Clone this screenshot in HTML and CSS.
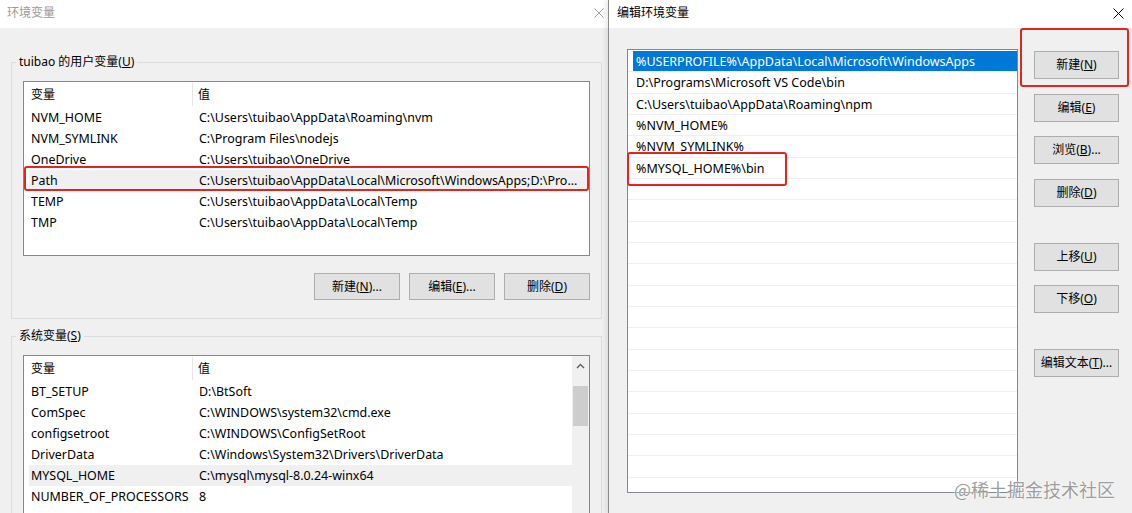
FILE: index.html
```html
<!DOCTYPE html>
<html lang="zh-CN">
<head>
<meta charset="utf-8">
<title>环境变量</title>
<link rel="stylesheet" href="styles.css">
</head>
<body>
<div class="screen">
  <section class="win env">
    <div class="titlebar inactive">
      <span class="title">环境变量</span>
      <svg class="close" width="10" height="10" viewBox="0 0 10 10"><path d="M0.5 0.5L9.5 9.5M9.5 0.5L0.5 9.5" stroke="#a0a0a0" stroke-width="1" fill="none"/></svg>
    </div>
    <div class="env-body">
      <div class="group user-group">
        <div class="group-title">tuibao 的用户变量(<u>U</u>)</div>
        <div class="listview user-list">
          <div class="lv-main">
            <div class="lv-head"><div class="hc c1">变量</div><div class="hc c2">值</div></div>
            <div class="lv-row"><span class="c1">NVM_HOME</span><span class="c2">C:\Users\tuibao\AppData\Roaming\nvm</span></div>
            <div class="lv-row"><span class="c1">NVM_SYMLINK</span><span class="c2">C:\Program Files\nodejs</span></div>
            <div class="lv-row"><span class="c1">OneDrive</span><span class="c2">C:\Users\tuibao\OneDrive</span></div>
            <div class="lv-row hl"><span class="c1">Path</span><span class="c2">C:\Users\tuibao\AppData\Local\Microsoft\WindowsApps;D:\Pro...</span></div>
            <div class="lv-row"><span class="c1">TEMP</span><span class="c2">C:\Users\tuibao\AppData\Local\Temp</span></div>
            <div class="lv-row"><span class="c1">TMP</span><span class="c2">C:\Users\tuibao\AppData\Local\Temp</span></div>
          </div>
          <div class="annot annot-path"></div>
        </div>
        <div class="btn-row">
          <button class="btn">新建(<u>N</u>)...</button>
          <button class="btn">编辑(<u>E</u>)...</button>
          <button class="btn">删除(<u>D</u>)</button>
        </div>
      </div>
      <div class="group sys-group">
        <div class="group-title">系统变量(<u>S</u>)</div>
        <div class="listview sys-list">
          <div class="lv-main">
            <div class="lv-head"><div class="hc c1">变量</div><div class="hc c2">值</div></div>
            <div class="lv-row"><span class="c1">BT_SETUP</span><span class="c2">D:\BtSoft</span></div>
            <div class="lv-row"><span class="c1">ComSpec</span><span class="c2">C:\WINDOWS\system32\cmd.exe</span></div>
            <div class="lv-row"><span class="c1">configsetroot</span><span class="c2">C:\WINDOWS\ConfigSetRoot</span></div>
            <div class="lv-row"><span class="c1">DriverData</span><span class="c2">C:\Windows\System32\Drivers\DriverData</span></div>
            <div class="lv-row hl"><span class="c1">MYSQL_HOME</span><span class="c2">C:\mysql\mysql-8.0.24-winx64</span></div>
            <div class="lv-row"><span class="c1">NUMBER_OF_PROCESSORS</span><span class="c2">8</span></div>
          </div>
          <div class="scrollbar">
            <div class="sb-up"><svg width="9" height="6" viewBox="0 0 9 6"><path d="M1 5L4.5 1.5L8 5" stroke="#606060" stroke-width="1.4" fill="none"/></svg></div>
            <div class="sb-thumb"></div>
          </div>
        </div>
      </div>
    </div>
  </section>

  <section class="win edit">
    <div class="titlebar">
      <span class="title">编辑环境变量</span>
      <svg class="close" width="11" height="11" viewBox="0 0 11 11"><path d="M0.5 0.5L10.5 10.5M10.5 0.5L0.5 10.5" stroke="#000" stroke-width="1" fill="none"/></svg>
    </div>
    <div class="edit-body">
      <div class="edit-list">
        <div class="edit-rows">
          <div class="er sel"><span>%USERPROFILE%\AppData\Local\Microsoft\WindowsApps</span></div>
          <div class="er"><span>D:\Programs\Microsoft VS Code\bin</span></div>
          <div class="er"><span>C:\Users\tuibao\AppData\Roaming\npm</span></div>
          <div class="er"><span>%NVM_HOME%</span></div>
          <div class="er"><span>%NVM_SYMLINK%</span></div>
          <div class="er"><span>%MYSQL_HOME%\bin</span></div>
          <div class="er"><span></span></div>
          <div class="er"><span></span></div>
          <div class="er"><span></span></div>
          <div class="er"><span></span></div>
          <div class="er"><span></span></div>
          <div class="er"><span></span></div>
          <div class="er"><span></span></div>
          <div class="er"><span></span></div>
          <div class="er"><span></span></div>
          <div class="er"><span></span></div>
          <div class="er"><span></span></div>
          <div class="er"><span></span></div>
          <div class="er"><span></span></div>
          <div class="er"><span></span></div>
          <div class="er"><span></span></div>
        </div>
        <div class="annot annot-mysql"></div>
      </div>
      <div class="btn-col">
        <div class="annot-wrap">
          <button class="btn btn-side">新建(<u>N</u>)</button>
          <div class="annot annot-new"></div>
        </div>
        <button class="btn btn-side gap-sm">编辑(<u>E</u>)</button>
        <button class="btn btn-side gap-sm">浏览(<u>B</u>)...</button>
        <button class="btn btn-side gap-sm">删除(<u>D</u>)</button>
        <button class="btn btn-side gap-lg">上移(<u>U</u>)</button>
        <button class="btn btn-side gap-sm">下移(<u>O</u>)</button>
        <button class="btn btn-side gap-lg">编辑文本(<u>T</u>)...</button>
      </div>
    </div>
  </section>

  <div class="watermark">@稀土掘金技术社区</div>
</div>
</body>
</html>
```
FILE: styles.css
```css
* { box-sizing: border-box; }
html, body { margin: 0; padding: 0; }
body {
  width: 1132px;
  height: 513px;
  overflow: hidden;
  font-family: "Noto Sans", "Noto Sans CJK SC", sans-serif;
  font-size: 12px;
  line-height: 16px;
  color: #000;
  background: #f0f0f0;
}
u { text-decoration: underline; text-underline-offset: 1px; }

.screen {
  position: relative;
  display: flex;
  width: 1132px;
  height: 513px;
  overflow: hidden;
  background: #f0f0f0;
}

.win {
  display: flex;
  flex-direction: column;
  background: #f0f0f0;
  min-width: 0;
}
.env { width: 608px; flex: none; }
.edit {
  flex: 1;
  border-left: 1px solid #8a8a8a;
  box-shadow: -3px 0 4px rgba(0, 0, 0, 0.07);
  position: relative;
  z-index: 1;
}

.titlebar {
  height: 28px;
  flex: none;
  background: #fff;
  display: flex;
  align-items: center;
  justify-content: space-between;
  padding-bottom: 2px;
}
.env .titlebar { padding-left: 7px; padding-right: 4px; }
.edit .titlebar { padding-left: 8px; padding-right: 8px; }
.titlebar.inactive .title { color: #999; }
.close { display: block; }

/* left window */
.env-body { padding: 34px 0 0 11px; }
.group {
  width: 591px;
  border: 1px solid #dcdcdc;
  padding: 0 11px;
}
.group-title {
  width: fit-content;
  margin: -9px 0 0 -7px;
  padding: 0 3px;
  background: #f0f0f0;
  line-height: 16px;
}
.sys-group { margin-top: 17px; height: 220px; }

.listview {
  position: relative;
  margin-top: 11px;
  display: flex;
  background: #fff;
  border: 1px solid #828790;
}
.user-list { height: 175px; }
.sys-list { height: 210px; }

.lv-main { flex: 1; min-width: 0; padding-left: 5px; }
.lv-head { display: flex; height: 25px; }
.hc { display: flex; align-items: center; }
.lv-head .c1 { width: 164px; padding-left: 2px; border-right: 1px solid #e5e5e5; margin: 1px 0 1px; }
.lv-head .c2 { flex: 1; padding-left: 5px; }
.lv-row { display: flex; height: 21px; line-height: 21px; white-space: nowrap; font-size: 12.45px; }
.lv-row.hl { background: #f0f0f0; }
.lv-row .c1 { width: 168px; flex: none; padding-left: 2px; overflow: hidden; }
.lv-row .c2 { flex: 1; padding-left: 2px; overflow: hidden; }

.scrollbar { width: 17px; flex: none; background: #f0f0f0; }
.sb-up { height: 17px; display: flex; align-items: center; justify-content: center; margin-top: 1px; }
.sb-thumb { height: 40px; margin: 12px 1px 0; background: #cdcdcd; }

.btn-row {
  display: flex;
  justify-content: flex-end;
  gap: 9px;
  margin-top: 17px;
  padding-bottom: 18px;
}
.btn {
  font: inherit;
  color: #000;
  background: #e1e1e1;
  border: 1px solid #adadad;
  width: 86px;
  height: 27px;
  padding: 0;
  display: flex;
  align-items: center;
  justify-content: center;
  white-space: nowrap;
}

/* annotations (red boxes) */
.annot {
  position: absolute;
  border: 2.5px solid #e8231d;
  border-radius: 3px;
  pointer-events: none;
}
.annot-path { left: 0; right: 0; top: 84px; height: 25px; }

/* right window */
.edit-body {
  flex: 1;
  display: flex;
  gap: 16px;
  padding: 21px 0 0 18px;
}
.edit-list {
  position: relative;
  width: 391px;
  height: 444px;
  flex: none;
  background: #fff;
  border: 1px solid #828790;
}
.edit-rows { height: 100%; overflow: hidden; padding-top: 1px; }
.er {
  height: 21.33px;
  border-bottom: 1px solid #efefef;
  padding-left: 5px;
  display: flex;
  font-size: 12.5px;
}
.er span {
  flex: 1;
  padding-left: 3px;
  line-height: 21px;
  white-space: nowrap;
}
.er.sel span { background: #0078d7; color: #fff; }
.annot-mysql { left: -1px; top: 102px; width: 160px; height: 34px; }

.btn-col {
  width: 85px;
  display: flex;
  flex-direction: column;
  padding-top: 2px;
}
.btn-side { width: 85px; height: 28px; }
.gap-sm { margin-top: 14.5px; }
.gap-lg { margin-top: 36px; }
.annot-wrap { position: relative; }
.annot-new { left: -14px; right: -10px; top: -23px; bottom: -8px; }

.watermark {
  position: absolute;
  right: 17px;
  top: 478px;
  font-family: "Noto Sans CJK SC", sans-serif;
  font-size: 18px;
  line-height: 22px;
  color: rgba(130, 130, 130, 0.8);
  text-shadow: 0 0 2px #fff, 0 0 1px #fff;
  z-index: 3;
  white-space: nowrap;
}
```
